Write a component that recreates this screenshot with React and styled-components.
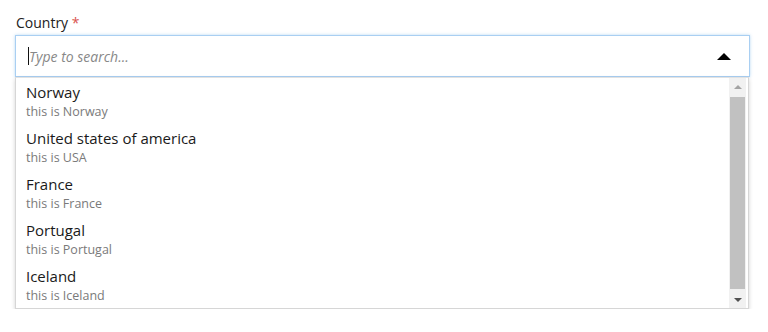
import React, { useState } from 'react';
import styled, { createGlobalStyle } from 'styled-components';

const GlobalStyle = createGlobalStyle`
  body {
    margin: 0;
    background: #fff;
    font-family: "Open Sans", "Liberation Sans", sans-serif;
  }
`;

const Field = styled.div`
  padding: 13px 18px 0 15px;
`;

const Label = styled.label`
  display: block;
  font-size: 14px;
  line-height: 20px;
  color: #222;
  margin: 0 0 2px 1px;
`;

const Required = styled.span`
  color: #d9534f;
`;

const InputRow = styled.div`
  display: flex;
  align-items: center;
  height: 40px;
  border: 1px solid #a9cff2;
  box-shadow: 0 0 3px rgba(102, 170, 230, 0.45);
  background: #fff;
`;

// drawn text cursor, the window has no focus when photographed
const TextCursor = styled.span`
  width: 1px;
  height: 18px;
  margin-left: 12px;
  background: #111;
`;

const SearchInput = styled.input`
  flex: 1;
  border: none;
  outline: none;
  font-family: inherit;
  font-size: 14px;
  padding: 0;
  height: 100%;
  background: transparent;
  color: #222;
  &::placeholder {
    font-style: italic;
    color: #888;
  }
`;

const Toggle = styled.button`
  border: none;
  background: none;
  width: 44px;
  height: 100%;
  display: flex;
  align-items: center;
  justify-content: center;
  padding: 0 6px 0 0;
  cursor: pointer;
`;

const Caret = styled.span`
  width: 0;
  height: 0;
  border-left: 7px solid transparent;
  border-right: 7px solid transparent;
  border-bottom: ${p => (p.$up ? '7px solid #000' : 'none')};
  border-top: ${p => (p.$up ? 'none' : '7px solid #000')};
`;

const Menu = styled.div`
  display: flex;
  border: 1px solid #d6d6d6;
  border-top: 1px solid #e2e2e2;
  background: #fff;
  box-shadow: 0 2px 4px rgba(0, 0, 0, 0.18);
  height: 230px;
  margin-right: 1px;
`;

const Options = styled.ul`
  flex: 1;
  list-style: none;
  margin: 0;
  padding: 0;
`;

const Option = styled.li`
  padding: 4px 10px 3px 10px;
  cursor: pointer;
`;

const Title = styled.div`
  font-size: 15px;
  line-height: 20px;
  color: #1a1a1a;
`;

const Sub = styled.div`
  font-size: 12.5px;
  line-height: 18px;
  margin-top: 1px;
  color: #7a7a7a;
`;

const Scrollbar = styled.div`
  width: 17px;
  background: #f1f1f1;
  display: flex;
  flex-direction: column;
  margin-right: 2px;
`;

const ScrollArrow = styled.div`
  height: 17px;
  display: flex;
  align-items: center;
  justify-content: center;
  &::after {
    content: '';
    width: 0;
    height: 0;
    border-left: 4px solid transparent;
    border-right: 4px solid transparent;
    ${p =>
      p.$up
        ? `border-bottom: 4px solid ${p.$color};`
        : `border-top: 4px solid ${p.$color};`}
  }
`;

const Thumb = styled.div`
  flex: 1;
  margin: 2px 1px;
  background: #c1c1c1;
`;

const countries = [
  { name: 'Norway', desc: 'this is Norway' },
  { name: 'United states of america', desc: 'this is USA' },
  { name: 'France', desc: 'this is France' },
  { name: 'Portugal', desc: 'this is Portugal' },
  { name: 'Iceland', desc: 'this is Iceland' },
];

const App = () => {
  const [query, setQuery] = useState('');

  return (
    <>
      <GlobalStyle />
      <Field>
        <Label>
          Country <Required>*</Required>
        </Label>
        <div>
          <InputRow>
            <TextCursor />
            <SearchInput
              placeholder="Type to search..."
              value={query}
              onChange={e => setQuery(e.target.value)}
            />
            <Toggle aria-label="close">
              <Caret $up />
            </Toggle>
          </InputRow>
          <Menu>
            <Options>
              {countries.map(c => (
                <Option key={c.name}>
                  <Title>{c.name}</Title>
                  <Sub>{c.desc}</Sub>
                </Option>
              ))}
            </Options>
            <Scrollbar>
              <ScrollArrow $up $color="#a3a3a3" />
              <Thumb />
              <ScrollArrow $color="#505050" />
            </Scrollbar>
          </Menu>
        </div>
      </Field>
    </>
  );
};

export default App;
